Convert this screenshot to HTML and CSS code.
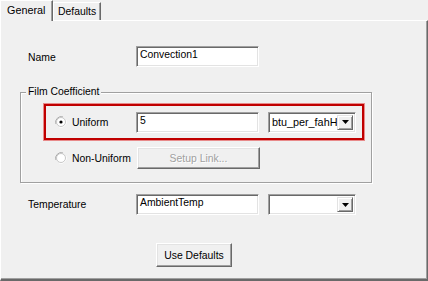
FILE: index.html
```html
<!DOCTYPE html>
<html>
<head>
<meta charset="utf-8">
<link rel="stylesheet" href="styles.css">
</head>
<body>
<div class="dialog">
  <div class="tabs">
    <div class="tab active">General</div>
    <div class="tab">Defaults</div>
  </div>
  <div class="panel">
    <div class="row row-name">
      <span class="label">Name</span>
      <div class="textbox">Convection1</div>
    </div>
    <div class="group">
      <span class="legend">Film Coefficient</span>
      <div class="highlight">
        <div class="opt">
          <svg class="radio" width="12" height="12" viewBox="0 0 12 12">
            <path d="M1 8 A5.5 5.5 0 0 1 8 1" fill="none" stroke="#a0a0a0" stroke-width="1"/>
            <path d="M4 11 A5.5 5.5 0 0 0 11 4" fill="none" stroke="#ffffff" stroke-width="1"/>
            <circle cx="6" cy="6" r="4.5" fill="#fff" stroke="#c8c8c8" stroke-width="1"/>
            <circle cx="6" cy="6" r="1.6" fill="#000"/>
          </svg>
          <span class="optlabel">Uniform</span>
        </div>
        <div class="textbox">5</div>
        <div class="combo">
          <span class="combotext">btu_per_fahH</span>
          <span class="arrowbtn"><svg width="7" height="4" viewBox="0 0 7 4"><path d="M0 0h7L3.5 4z" fill="#000"/></svg></span>
        </div>
      </div>
      <div class="row row-nonuni">
        <div class="opt">
          <svg class="radio" width="12" height="12" viewBox="0 0 12 12">
            <path d="M1 8 A5.5 5.5 0 0 1 8 1" fill="none" stroke="#a0a0a0" stroke-width="1"/>
            <path d="M4 11 A5.5 5.5 0 0 0 11 4" fill="none" stroke="#ffffff" stroke-width="1"/>
            <circle cx="6" cy="6" r="4.5" fill="#fff" stroke="#c8c8c8" stroke-width="1"/>
          </svg>
          <span class="optlabel">Non-Uniform</span>
        </div>
        <div class="button disabled setup">Setup Link...</div>
      </div>
    </div>
    <div class="row row-temp">
      <span class="label">Temperature</span>
      <div class="textbox">AmbientTemp</div>
      <div class="combo">
        <span class="combotext"></span>
        <span class="arrowbtn"><svg width="7" height="4" viewBox="0 0 7 4"><path d="M0 0h7L3.5 4z" fill="#000"/></svg></span>
      </div>
    </div>
    <div class="row row-btn">
      <div class="button defaults">Use Defaults</div>
    </div>
  </div>
</div>
</body>
</html>
```

FILE: styles.css
```css
* { box-sizing: border-box; }
html, body { margin: 0; padding: 0; }
body {
  width: 428px;
  height: 281px;
  background: #f0f0f0;
  font-family: "Liberation Sans", Arial, sans-serif;
  font-size: 10.4px;
  color: #000;
  overflow: hidden;
}
.dialog { display: flex; flex-direction: column; width: 428px; height: 281px; }
.tabs { display: flex; align-items: flex-end; height: 20px; padding-left: 0; }
.tab {
  height: 18px;
  padding: 3px 5px 0 4px;
  border-left: 1px solid #fff;
  border-top: 1px solid #fff;
  border-right: 1px solid #696969;
  box-shadow: inset -1px 0 0 #a0a0a0;
  margin-bottom: 0;
  background: #f0f0f0;
  width: 48px;
}
.tab.active {
  height: 21px;
  width: 53px;
  padding: 3px 0 0 6px;
  margin-bottom: -1px;
  position: relative;
  z-index: 1;
  font-size: 10.8px;
}
.panel {
  flex: 1;
  display: flex;
  flex-direction: column;
  border-left: 1px solid #fff;
  border-top: 1px solid #fff;
  border-right: 1px solid #696969;
  border-bottom: 2px solid #696969;
  box-shadow: inset -1px -1px 0 #a0a0a0;
  padding-left: 19px;
}
.row { display: flex; align-items: center; }
.label { width: 116px; padding-left: 8px; }
.row-name { margin-top: 25px; height: 21px; }
.row-name .label { padding-top: 2px; }
.textbox {
  width: 123px;
  height: 21px;
  background: #fff;
  border-top: 1px solid #a0a0a0;
  border-left: 1px solid #a0a0a0;
  border-right: 1px solid #fff;
  border-bottom: 1px solid #fff;
  box-shadow: inset 1px 1px 0 #696969, inset -1px -1px 0 #e3e3e3;
  padding: 2px 0 0 3px;
  line-height: 12px;
  color: #000;
}
.combo {
  width: 88px;
  height: 21px;
  margin-left: 9px;
  display: flex;
  background: #fff;
  border-top: 1px solid #a0a0a0;
  border-left: 1px solid #a0a0a0;
  border-right: 1px solid #fff;
  border-bottom: 1px solid #fff;
  box-shadow: inset 1px 1px 0 #696969, inset -1px -1px 0 #e3e3e3;
  padding: 2px 2px 2px 2px;
}
.combotext { flex: 1; padding: 1px 0 0 1px; line-height: 13px; overflow: hidden; white-space: nowrap; font-size: 10.8px; }
.arrowbtn {
  width: 16px;
  height: 15px;
  background: #f0f0f0;
  border-top: 1px solid #e3e3e3;
  border-left: 1px solid #e3e3e3;
  border-right: 1px solid #696969;
  border-bottom: 1px solid #696969;
  box-shadow: inset 1px 1px 0 #fff, inset -1px -1px 0 #a0a0a0;
  display: flex;
  align-items: center;
  justify-content: center;
}
.group {
  position: relative;
  margin-top: 25px;
  width: 352px;
  height: 91px;
  border: 1px solid #a0a0a0;
  box-shadow: 1px 1px 0 #fff, inset 1px 1px 0 #fff;
  display: flex;
  flex-direction: column;
  padding-left: 23px;
}
.legend {
  position: absolute;
  left: 5px;
  top: -8px;
  padding: 0 2px 0 2px;
  background: #f0f0f0;
  line-height: 14px;
}
.highlight {
  margin-top: 11px;
  width: 320px;
  height: 36px;
  border: 2px solid #c00000;
  box-shadow: 0 0 0 1px #e88a8a;
  display: flex;
  align-items: center;
  padding-left: 9px;
}
.opt { display: flex; align-items: center; width: 81px; }
.radio { flex: none; }
.optlabel { margin-left: 5px; white-space: nowrap; }
.row-nonuni { margin-top: 7px; height: 22px; padding-left: 11px; }
.row-nonuni .opt { width: 82px; }
.button {
  display: flex;
  align-items: center;
  justify-content: center;
  background: #f0f0f0;
  border-top: 1px solid #fff;
  border-left: 1px solid #fff;
  border-right: 1px solid #696969;
  border-bottom: 1px solid #696969;
  box-shadow: inset -1px -1px 0 #a0a0a0, inset 1px 1px 0 #e3e3e3;
}
.setup { width: 123px; height: 22px; color: #a0a0a0; text-shadow: 1px 1px 0 #fff; }
.row-temp { margin-top: 11px; height: 21px; }
.row-btn { margin-top: 28px; padding-left: 136px; }
.defaults { width: 76px; height: 24px; }
```
